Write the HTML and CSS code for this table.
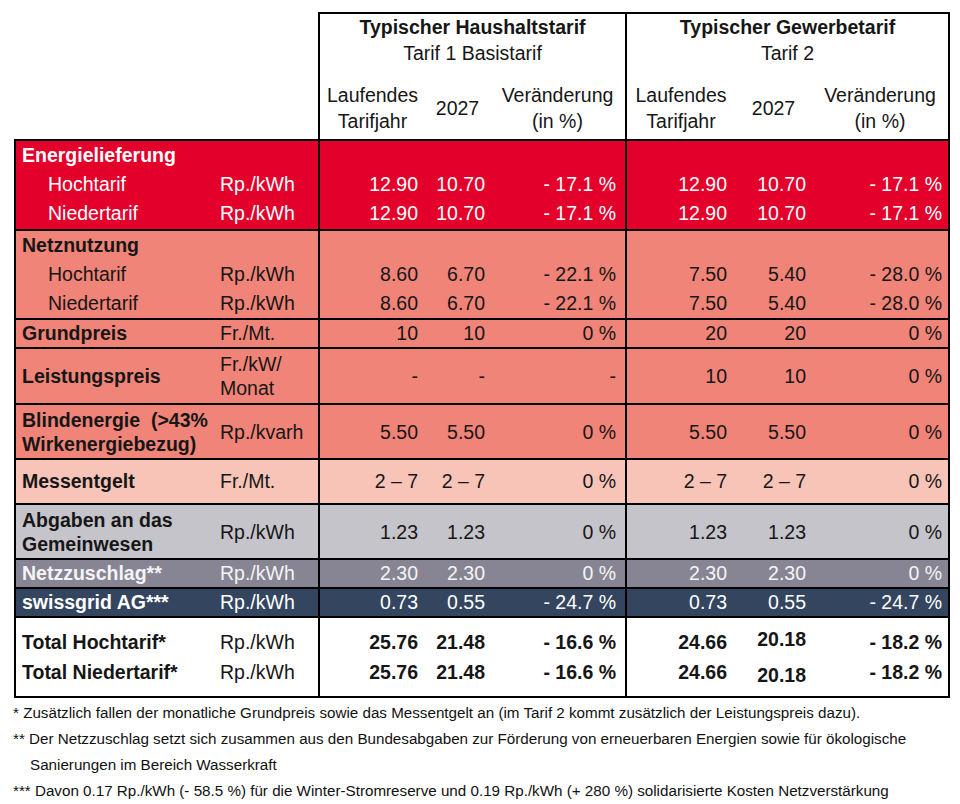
FILE: index.html
```html
<!DOCTYPE html>
<html lang="de">
<head>
    <meta charset="UTF-8">
    <title>Stromtarife 2027</title>
    <link rel="stylesheet" href="styles.css">
</head>
<body>
    <table class="tariffs">
        <colgroup>
            <col class="c-label">
            <col class="c-unit">
            <col class="c-n1">
            <col class="c-n2">
            <col class="c-n3">
            <col class="c-n4">
            <col class="c-n5">
            <col class="c-n6">
        </colgroup>
        <thead>
            <tr class="head-top">
                <th></th>
                <th></th>
                <th colspan="3" class="t1"><strong>Typischer Haushaltstarif</strong><br>Tarif 1 Basistarif</th>
                <th colspan="3" class="t2"><strong>Typischer Gewerbetarif</strong><br>Tarif 2</th>
            </tr>
            <tr class="head-sub">
                <th></th>
                <th></th>
                <th class="t1">Laufendes<br>Tarifjahr</th>
                <th>2027</th>
                <th>Veränderung<br>(in %)</th>
                <th class="t2">Laufendes<br>Tarifjahr</th>
                <th>2027</th>
                <th class="last">Veränderung<br>(in %)</th>
            </tr>
        </thead>

        <tbody class="grp energy">
            <tr class="first">
                <td class="label">Energielieferung</td>
                <td></td><td></td><td></td><td></td><td></td><td></td><td></td>
            </tr>
            <tr>
                <td class="label sub">Hochtarif</td>
                <td class="unit">Rp./kWh</td>
                <td>12.90</td><td>10.70</td><td>- 17.1 %</td>
                <td>12.90</td><td>10.70</td><td>- 17.1 %</td>
            </tr>
            <tr class="end">
                <td class="label sub">Niedertarif</td>
                <td class="unit">Rp./kWh</td>
                <td>12.90</td><td>10.70</td><td>- 17.1 %</td>
                <td>12.90</td><td>10.70</td><td>- 17.1 %</td>
            </tr>
        </tbody>

        <tbody class="grp grid">
            <tr class="first">
                <td class="label">Netznutzung</td>
                <td></td><td></td><td></td><td></td><td></td><td></td><td></td>
            </tr>
            <tr>
                <td class="label sub">Hochtarif</td>
                <td class="unit">Rp./kWh</td>
                <td>8.60</td><td>6.70</td><td>- 22.1 %</td>
                <td>7.50</td><td>5.40</td><td>- 28.0 %</td>
            </tr>
            <tr>
                <td class="label sub">Niedertarif</td>
                <td class="unit">Rp./kWh</td>
                <td>8.60</td><td>6.70</td><td>- 22.1 %</td>
                <td>7.50</td><td>5.40</td><td>- 28.0 %</td>
            </tr>
        </tbody>

        <tbody class="grp grid single">
            <tr class="first">
                <td class="label">Grundpreis</td>
                <td class="unit">Fr./Mt.</td>
                <td>10</td><td>10</td><td>0 %</td>
                <td>20</td><td>20</td><td>0 %</td>
            </tr>
        </tbody>

        <tbody class="grp grid double">
            <tr class="first">
                <td class="label">Leistungspreis</td>
                <td class="unit">Fr./kW/<br>Monat</td>
                <td>-</td><td>-</td><td>-</td>
                <td>10</td><td>10</td><td>0 %</td>
            </tr>
        </tbody>

        <tbody class="grp grid double tight">
            <tr class="first">
                <td class="label">Blindenergie&nbsp; (&gt;43%<br>Wirkenergiebezug)</td>
                <td class="unit">Rp./kvarh</td>
                <td>5.50</td><td>5.50</td><td>0 %</td>
                <td>5.50</td><td>5.50</td><td>0 %</td>
            </tr>
        </tbody>

        <tbody class="grp metering">
            <tr class="first">
                <td class="label">Messentgelt</td>
                <td class="unit">Fr./Mt.</td>
                <td>2 – 7</td><td>2 – 7</td><td>0 %</td>
                <td>2 – 7</td><td>2 – 7</td><td>0 %</td>
            </tr>
        </tbody>

        <tbody class="grp levies double tight">
            <tr class="first">
                <td class="label">Abgaben an das<br>Gemeinwesen</td>
                <td class="unit">Rp./kWh</td>
                <td>1.23</td><td>1.23</td><td>0 %</td>
                <td>1.23</td><td>1.23</td><td>0 %</td>
            </tr>
        </tbody>

        <tbody class="grp surcharge single">
            <tr class="first">
                <td class="label">Netzzuschlag**</td>
                <td class="unit">Rp./kWh</td>
                <td>2.30</td><td>2.30</td><td>0 %</td>
                <td>2.30</td><td>2.30</td><td>0 %</td>
            </tr>
        </tbody>

        <tbody class="grp swissgrid single">
            <tr class="first">
                <td class="label">swissgrid AG***</td>
                <td class="unit">Rp./kWh</td>
                <td>0.73</td><td>0.55</td><td>- 24.7 %</td>
                <td>0.73</td><td>0.55</td><td>- 24.7 %</td>
            </tr>
        </tbody>

        <tbody class="grp totals">
            <tr class="first">
                <td class="label">Total Hochtarif*</td>
                <td class="unit">Rp./kWh</td>
                <td>25.76</td><td>21.48</td><td>- 16.6 %</td>
                <td>24.66</td><td class="raise">20.18</td><td>- 18.2 %</td>
            </tr>
            <tr class="bottom">
                <td class="label">Total Niedertarif*</td>
                <td class="unit">Rp./kWh</td>
                <td>25.76</td><td>21.48</td><td>- 16.6 %</td>
                <td>24.66</td><td class="lower">20.18</td><td>- 18.2 %</td>
            </tr>
        </tbody>
    </table>

    <div class="notes">
        <p>* Zusätzlich fallen der monatliche Grundpreis sowie das Messentgelt an (im Tarif 2 kommt zusätzlich der Leistungspreis dazu).</p>
        <p class="hang">** Der Netzzuschlag setzt sich zusammen aus den Bundesabgaben zur Förderung von erneuerbaren Energien sowie für ökologische<br>Sanierungen im Bereich Wasserkraft</p>
        <p>*** Davon 0.17 Rp./kWh (- 58.5 %) für die Winter-Stromreserve und 0.19 Rp./kWh (+ 280 %) solidarisierte Kosten Netzverstärkung</p>
    </div>
</body>
</html>
```

FILE: styles.css
```css
body {
    margin: 0;
    background: #fff;
    color: #161616;
    font-family: "Liberation Sans", Arial, sans-serif;
}

/* main table */
.tariffs {
    margin: 12px 0 0 14px;
    width: 936px;
    table-layout: fixed;
    border-collapse: separate;
    border-spacing: 0;
    font-size: 19.5px;
}
.tariffs th,
.tariffs td {
    box-sizing: border-box;
    padding: 0;
    white-space: nowrap;
    vertical-align: middle;
}
.c-label { width: 201px; }
.c-unit { width: 103px; }
.c-n1 { width: 107px; }
.c-n2 { width: 65px; }
.c-n3 { width: 135px; }
.c-n4 { width: 110px; }
.c-n5 { width: 77px; }
.c-n6 { width: 138px; }

/* header */
.tariffs th {
    font-weight: normal;
    text-align: center;
    line-height: 26px;
}
.head-top th.t1,
.head-top th.t2 {
    border-top: 2px solid #000;
    padding-bottom: 16px;
}
.head-sub th { padding-bottom: 5px; }
th.t1, th.t2 { border-left: 2px solid #000; }
.head-top th.t2,
.head-sub th.last { border-right: 2px solid #000; }

/* body cells */
.grp td {
    text-align: right;
    line-height: 29px;
}
.grp td.label {
    text-align: left;
    font-weight: bold;
    padding-left: 6px;
    border-left: 2px solid #000;
}
.grp td.label.sub {
    font-weight: normal;
    padding-left: 32px;
}
.grp td.unit {
    text-align: left;
    padding-left: 5px;
}
.grp td:nth-child(3) { padding-right: 7px; border-left: 2px solid #000; }
.grp td:nth-child(4) { padding-right: 5px; }
.grp td:nth-child(5) { padding-right: 9px; }
.grp td:nth-child(6) { padding-right: 8px; border-left: 2px solid #000; }
.grp td:nth-child(7) { padding-right: 6px; }
.grp td:nth-child(8) { padding-right: 6px; border-right: 2px solid #000; }

.grp tr.first td { border-top: 2px solid #000; }
.grp tr.end td { padding-bottom: 1px; }

.single td { line-height: 27px; }
.double td { line-height: 24px; padding-top: 3px; padding-bottom: 3px; }
.double.tight td { padding-bottom: 2px; }

/* group colours */
.energy td { background: #e3002b; color: #fff; }
.grid td { background: #f08478; }
.metering td {
    background: #f9c4b8;
    line-height: 27px;
    padding-top: 8px;
    padding-bottom: 8px;
}
.levies td { background: #c5c4cb; }
.surcharge td { background: #878593; color: #f4f4f6; }
.swissgrid td { background: #34455f; color: #fff; }

.totals td { font-weight: bold; line-height: 26px; }
.totals td.unit { font-weight: normal; }
.totals tr.first td { padding-top: 11px; padding-bottom: 2px; }
.totals tr.bottom td {
    padding-top: 2px;
    padding-bottom: 11px;
    border-bottom: 2px solid #000;
}
.totals tr.first td.raise { padding-top: 8px; padding-bottom: 5px; }
.totals tr.bottom td.lower { padding-top: 5px; padding-bottom: 8px; }

/* footnotes */
.notes {
    margin: 2px 0 0 13px;
    font-size: 15.2px;
    line-height: 26px;
    color: #111;
}
.notes p { margin: 0; }
.notes .hang {
    padding-left: 17px;
    text-indent: -17px;
}
```
